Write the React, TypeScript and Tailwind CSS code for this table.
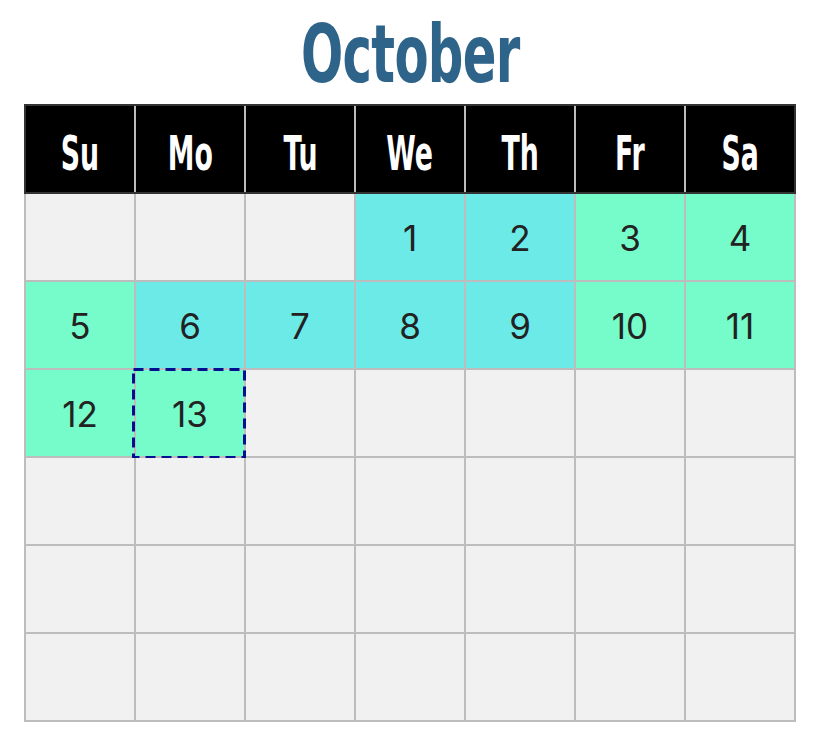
import React from "react"

const days = ["Su", "Mo", "Tu", "We", "Th", "Fr", "Sa"]

type Cell = { day?: number; kind: "empty" | "week" | "weekend"; focus?: boolean }

function buildCells(): Cell[] {
  const cells: Cell[] = []
  for (let i = 0; i < 3; i++) cells.push({ kind: "empty" })
  for (let d = 1; d <= 13; d++) {
    const col = (d + 2) % 7
    const weekend = col === 0 || col === 5 || col === 6 || d === 13
    cells.push({ day: d, kind: weekend ? "weekend" : "week", focus: d === 13 })
  }
  while (cells.length < 42) cells.push({ kind: "empty" })
  return cells
}

const condensed = { fontFamily: '"Liberation Sans Narrow", "DejaVu Sans Condensed", sans-serif' }

export default function App() {
  const cells = buildCells()
  return (
    <div className="w-[830px] h-[752px] bg-white">
      <div className="ml-[24px] w-[772px]">
        {/* Title */}
        <div className="h-[104px] flex items-center justify-center pt-[6px]">
          <h1
            className="text-[80px] leading-none font-bold text-[#2e6489] scale-x-[0.69] tracking-[-1px]"
            style={condensed}
          >
            October
          </h1>
        </div>

        {/* Weekday header */}
        <div className="flex h-[90px] border-2 border-[#333333] bg-black">
          {days
            .map((d) => (
              <div
                key={d}
                className="w-[108px] flex items-center justify-center pt-[8px] text-white text-[48px] leading-none font-bold"
                style={condensed}
              >
                <span className="scale-x-[0.62]">{d}</span>
              </div>
            ))
            .flatMap((el, i) =>
              i < 6 ? [el, <div key={"sep" + i} className="w-[2px] bg-[#bdbdbd]" />] : [el]
            )}
        </div>

        {/* Days */}
        <div className="grid grid-cols-7 border-l-2 border-[#bdbdbd]">
          {cells.map((c, i) => (
            <div
              key={i}
              className={
                "relative h-[88px] border-r-2 border-b-2 border-[#bdbdbd] flex items-center justify-center pt-[2px] text-[35px] text-[#222222] " +
                (c.kind === "week" ? "bg-[#6beae8]" : c.kind === "weekend" ? "bg-[#76fcca]" : "bg-[#f1f1f1]")
              }
              style={{ fontFamily: 'Inter, "Liberation Sans", sans-serif' }}
            >
              {c.day}
              {c.focus && (
                <svg
                  className="absolute -left-[4px] -top-[2px]"
                  width="114"
                  height="91"
                  viewBox="0 0 114 91"
                >
                  <rect
                    x="1.5"
                    y="1.5"
                    width="111"
                    height="88"
                    fill="none"
                    stroke="#00108f"
                    strokeWidth="3"
                    strokeDasharray="10 6"
                  />
                </svg>
              )}
            </div>
          ))}
        </div>
      </div>
    </div>
  )
}
